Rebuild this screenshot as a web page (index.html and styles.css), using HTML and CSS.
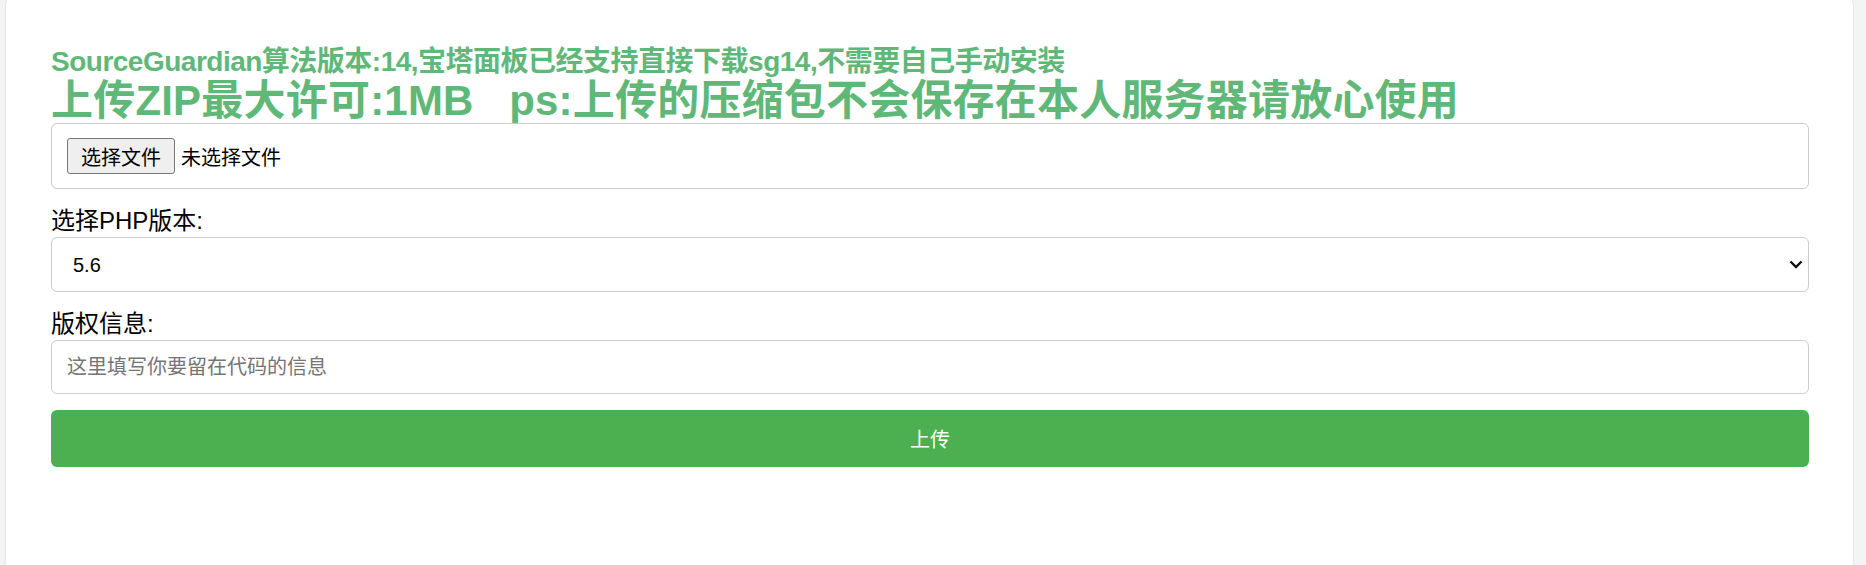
FILE: index.html
```html
<!DOCTYPE html>
<html lang="zh-CN">
<head>
<meta charset="utf-8">
<title>SourceGuardian 加密</title>
<link rel="stylesheet" href="styles.css">
</head>
<body>
<div class="card">
  <h3 class="title-sm">SourceGuardian算法版本:14,宝塔面板已经支持直接下载sg14,不需要自己手动安装</h3>
  <h2 class="title-lg">上传ZIP最大许可:1MB&nbsp;&nbsp;&nbsp;ps:上传的压缩包不会保存在本人服务器请放心使用</h2>
  <form class="form">
    <div class="file-box">
      <label class="file-label">
        <input type="file" class="file-native">
        <span class="file-btn">选择文件</span>
        <span class="file-name">未选择文件</span>
      </label>
    </div>
    <label class="field-label" for="php">选择PHP版本:</label>
    <div class="select-wrap">
      <select id="php" class="select">
        <option>5.6</option>
        <option>7.0</option>
        <option>7.1</option>
        <option>7.2</option>
        <option>7.3</option>
        <option>7.4</option>
        <option>8.0</option>
      </select>
      <svg class="chevron" width="14" height="9" viewBox="0 0 14 9"><path d="M1.5 1.5 L7 7 L12.5 1.5" fill="none" stroke="#111" stroke-width="2.4"/></svg>
    </div>
    <label class="field-label" for="copy">版权信息:</label>
    <input id="copy" class="text-input" type="text" placeholder="这里填写你要留在代码的信息">
    <button type="button" class="submit">上传</button>
  </form>
</div>
</body>
</html>
```
FILE: styles.css
```css
html, body {
  margin: 0;
  padding: 0;
  background: #f4f4f4;
  overflow: hidden;
}
body {
  font-family: "Liberation Sans", "Noto Sans CJK SC", sans-serif;
  color: #000;
}
.card {
  box-sizing: border-box;
  margin-top: -10px;
  margin-left: 5px;
  width: 1849px;
  height: 640px;
  background: #fff;
  border: 1px solid #e6e6e6;
  border-radius: 15px;
  padding: 55px 44px 0 45px;
}
.title-sm {
  margin: 0;
  font-family: "Liberation Sans", "Noto Sans CJK SC", sans-serif;
  font-weight: 700;
  font-size: 28px;
  line-height: 32px;
  letter-spacing: -0.5px;
  color: #5fb878;
  white-space: nowrap;
}
.title-lg {
  margin: 4px 0 3px;
  font-family: "Liberation Sans", "Noto Sans CJK SC", sans-serif;
  font-weight: 700;
  font-size: 42px;
  line-height: 38px;
  letter-spacing: 0.2px;
  color: #5fb878;
  white-space: nowrap;
}
.form {
  display: flex;
  flex-direction: column;
}
.file-box {
  box-sizing: border-box;
  height: 66px;
  border: 1px solid #cccccc;
  border-radius: 6px;
  padding: 0 15px;
  display: flex;
  align-items: center;
  margin-bottom: 16px;
}
.file-label {
  display: flex;
  align-items: center;
  gap: 6px;
}
.file-native {
  display: none;
}
.file-btn {
  box-sizing: border-box;
  width: 108px;
  height: 36px;
  background: #efefef;
  border: 1px solid #767676;
  border-radius: 3px;
  display: flex;
  align-items: center;
  justify-content: center;
  font-size: 20px;
  color: #000;
}
.file-name {
  font-size: 20px;
  color: #000;
}
.field-label {
  display: block;
  font-size: 24px;
  line-height: 32px;
  height: 32px;
}
.select-wrap {
  position: relative;
  margin-bottom: 16px;
}
.select {
  box-sizing: border-box;
  width: 100%;
  height: 55px;
  border: 1px solid #cccccc;
  border-radius: 6px;
  background: #fff;
  padding: 0 15px 0 21px;
  font-family: "Liberation Sans", "Noto Sans CJK SC", sans-serif;
  font-size: 20px;
  color: #000;
  -webkit-appearance: none;
  appearance: none;
  outline: none;
}
.chevron {
  position: absolute;
  right: 6px;
  top: 23px;
  pointer-events: none;
}
.text-input {
  box-sizing: border-box;
  width: 100%;
  height: 54px;
  border: 1px solid #cccccc;
  border-radius: 6px;
  padding: 0 15px;
  font-family: "Liberation Sans", "Noto Sans CJK SC", sans-serif;
  font-size: 20px;
  margin-bottom: 16px;
  outline: none;
}
.text-input::placeholder {
  color: #757575;
}
.submit {
  box-sizing: border-box;
  width: 100%;
  height: 57px;
  border: none;
  border-radius: 6px;
  background: #4caf50;
  color: #fff;
  font-family: "Noto Sans CJK SC", sans-serif;
  font-size: 20px;
  cursor: pointer;
}
```
